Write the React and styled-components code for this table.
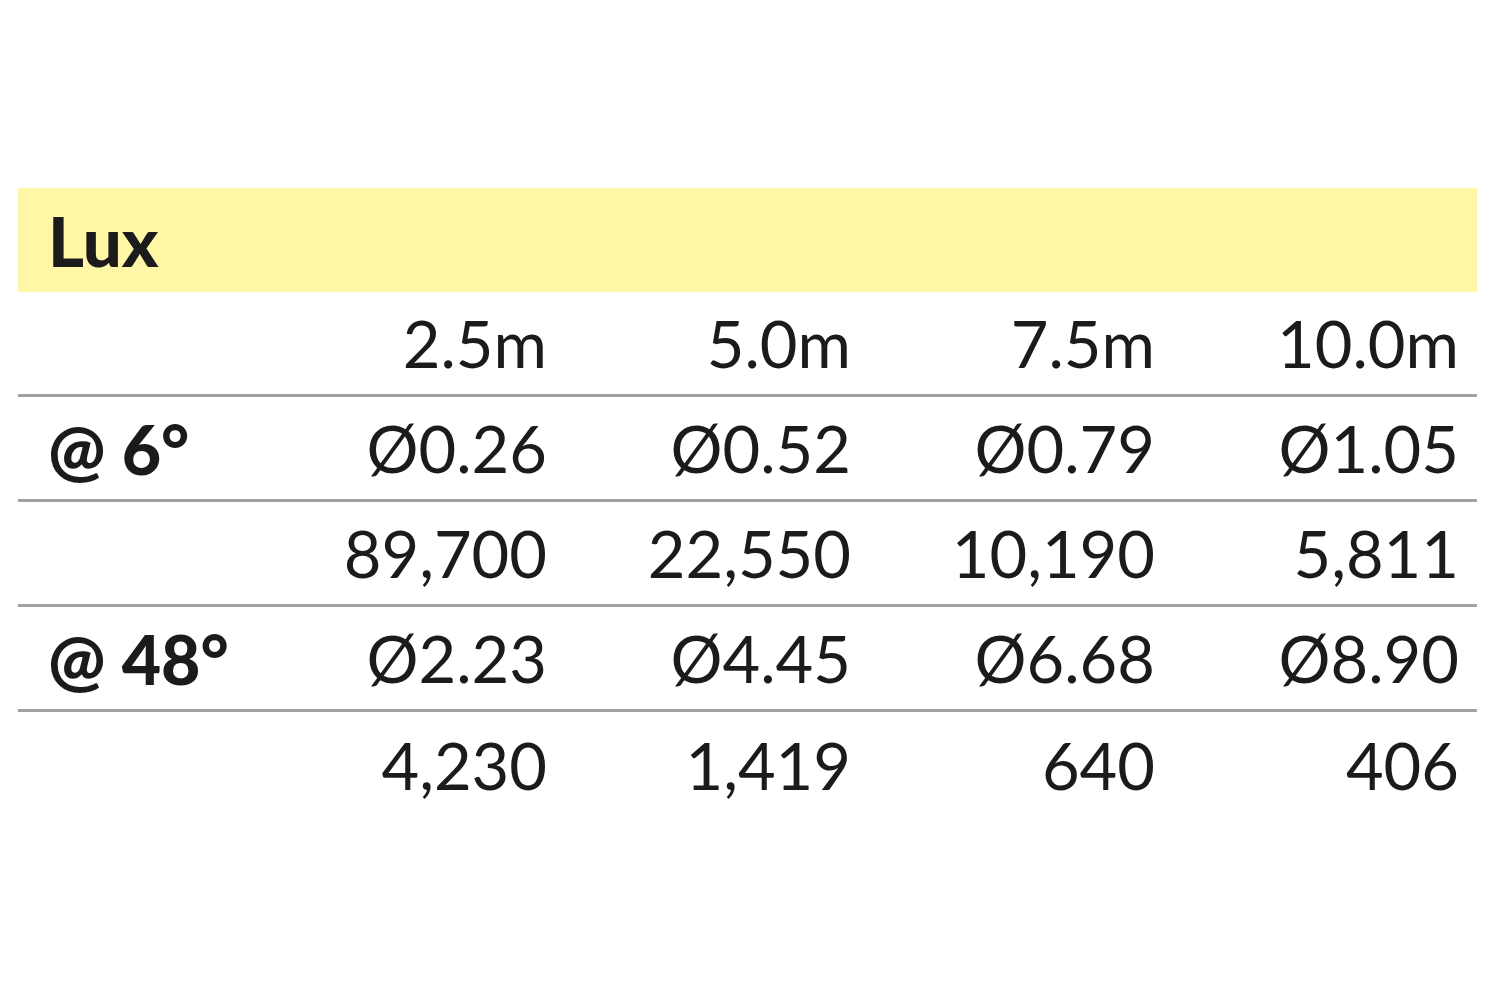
import React from "react";
import styled, { createGlobalStyle } from "styled-components";

const GlobalStyle = createGlobalStyle`
  html, body {
    margin: 0;
    padding: 0;
    background: #ffffff;
  }
  body {
    font-family: Lato, "Liberation Sans", sans-serif;
    color: #1b1b1b;
  }
`;

const Page = styled.div`
  width: 1500px;
  height: 1000px;
  padding: 188px 23px 0 18px;
  box-sizing: border-box;
`;

const Band = styled.div`
  height: 104px;
  background: #fff6a6;
  display: flex;
  align-items: center;
  padding-left: 30px;
  font-size: 69px;
  font-weight: 900;
`;

const Row = styled.div`
  display: grid;
  grid-template-columns: 243px repeat(4, 304px);
  height: 105px;
  box-sizing: border-box;
  border-bottom: ${({ $divider }) => ($divider ? "3px solid #a2a2a2" : "none")};
  align-items: center;
`;

const Label = styled.div`
  padding-left: 30px;
  font-size: 68px;
  font-weight: 900;
`;

const Value = styled.div`
  text-align: right;
  padding-right: 18px;
  font-size: 65px;
  font-weight: 400;
`;

const rows = [
  { label: "", values: ["2.5m", "5.0m", "7.5m", "10.0m"] },
  { label: "@ 6°", values: ["Ø0.26", "Ø0.52", "Ø0.79", "Ø1.05"] },
  { label: "", values: ["89,700", "22,550", "10,190", "5,811"] },
  { label: "@ 48°", values: ["Ø2.23", "Ø4.45", "Ø6.68", "Ø8.90"] },
  { label: "", values: ["4,230", "1,419", "640", "406"] },
];

const App = () => {
  return (
    <Page>
      <GlobalStyle />
      <Band>Lux</Band>
      {rows.map((row, i) => (
        <Row key={i} $divider={i < rows.length - 1}>
          <Label>{row.label}</Label>
          {row.values.map((v) => (
            <Value key={v}>{v}</Value>
          ))}
        </Row>
      ))}
    </Page>
  );
};

export default App;
